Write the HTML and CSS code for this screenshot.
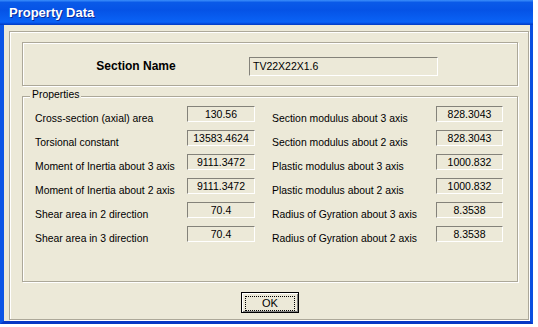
FILE: index.html
```html
<!DOCTYPE html>
<html lang="en">
<head>
  <meta charset="UTF-8" />
  <title>Property Data</title>
  <link rel="stylesheet" href="styles.css">
</head>
<body>
  <div class="window">
    <div class="titlebar">Property Data</div>
    <div class="client">
      <div class="frame">

        <div class="group section-group">
          <div class="section-label">Section Name</div>
          <div class="name-field">TV22X22X1.6</div>
        </div>

        <div class="group props">
          <span class="legend">Properties</span>
          <div class="grid">
            <div class="label">Cross-section (axial) area</div>
            <div class="value">130.56</div>
            <div class="spacer"></div>
            <div class="label">Section modulus about 3 axis</div>
            <div class="value">828.3043</div>

            <div class="label">Torsional constant</div>
            <div class="value">13583.4624</div>
            <div class="spacer"></div>
            <div class="label">Section modulus about 2 axis</div>
            <div class="value">828.3043</div>

            <div class="label">Moment of Inertia about 3 axis</div>
            <div class="value">9111.3472</div>
            <div class="spacer"></div>
            <div class="label">Plastic modulus about 3 axis</div>
            <div class="value">1000.832</div>

            <div class="label">Moment of Inertia about 2 axis</div>
            <div class="value">9111.3472</div>
            <div class="spacer"></div>
            <div class="label">Plastic modulus about 2 axis</div>
            <div class="value">1000.832</div>

            <div class="label">Shear area in 2 direction</div>
            <div class="value">70.4</div>
            <div class="spacer"></div>
            <div class="label">Radius of Gyration about 3 axis</div>
            <div class="value">8.3538</div>

            <div class="label">Shear area in 3 direction</div>
            <div class="value">70.4</div>
            <div class="spacer"></div>
            <div class="label">Radius of Gyration about 2 axis</div>
            <div class="value">8.3538</div>
          </div>
        </div>

        <div class="buttons">
          <button class="ok" type="button"><span>OK</span></button>
        </div>

      </div>
    </div>
  </div>
</body>
</html>
```

FILE: styles.css
```css
body {
  margin: 0;
  background: #fff;
  font-family: "Liberation Sans", Arial, sans-serif;
  font-size: 10.4px;
  color: #000;
}
.window {
  width: 533px;
  height: 324px;
}
.titlebar {
  height: 25px;
  line-height: 25px;
  padding-left: 9px;
  color: #fff;
  font-size: 13px;
  font-weight: bold;
  text-shadow: 1px 1px #0a2b9a;
  background: linear-gradient(180deg, #3b8ffb 0, #0a5ae8 10%, #0553e6 40%, #0a62f5 86%, #0758ee 92%, #0341cc 96%, #0340c8 100%);
}
.client {
  box-sizing: border-box;
  height: 299px;
  background: #ece9d8;
  border-left: 4px solid #0b55e6;
  border-right: 3px solid #0a4fe0;
  border-bottom: 3px solid #0637c4;
  padding: 6px 1px 0 5px;
}
.frame {
  box-sizing: border-box;
  height: 289px;
  border: 1px solid #aca899;
  box-shadow: inset 1px 1px #fff, 1px 1px #fff;
  padding: 10px 0 0 12px;
}
.group {
  box-sizing: border-box;
  width: 496px;
  border: 1px solid #aca899;
  box-shadow: inset 1px 1px #fff, 1px 1px #fff;
}
.section-group {
  height: 44px;
  display: flex;
  align-items: flex-start;
  padding-top: 14px;
}
.section-label {
  width: 226px;
  text-align: center;
  font-size: 12px;
  font-weight: bold;
  line-height: 19px;
}
.name-field {
  box-sizing: border-box;
  width: 189px;
  height: 19px;
  line-height: 17px;
  padding-left: 3px;
  font-size: 10.5px;
  border: 1px solid;
  border-color: #84827a #fff #fff #84827a;
}
.props {
  position: relative;
  height: 186px;
  margin-top: 10px;
  padding: 9px 0 0 12px;
}
.legend {
  position: absolute;
  top: -8px;
  left: 7px;
  padding: 0 2px;
  line-height: 12px;
  background: #ece9d8;
}
.grid {
  display: grid;
  grid-template-columns: 152px 68px 17px 164px 67px;
  grid-auto-rows: 24px;
}
.label {
  padding-top: 7px;
  line-height: 12px;
  white-space: nowrap;
}
.value {
  box-sizing: border-box;
  height: 16px;
  line-height: 14px;
  text-align: center;
  font-size: 10.5px;
  border: 1px solid;
  border-color: #84827a #fff #fff #84827a;
}
.buttons {
  display: flex;
  justify-content: center;
  padding-right: 10px;
  margin-top: 10px;
}
.ok {
  box-sizing: border-box;
  width: 58px;
  height: 21px;
  padding: 3px;
  margin: 0;
  border: 1px solid #000;
  background: #ece9d8;
  box-shadow: inset 1px 1px #fff, inset -1px -1px #808080;
  font-family: "Liberation Sans", Arial, sans-serif;
  font-size: 11px;
  color: #000;
}
.ok span {
  display: block;
  height: 13px;
  line-height: 12px;
  border: 1px dotted #000;
}
```
